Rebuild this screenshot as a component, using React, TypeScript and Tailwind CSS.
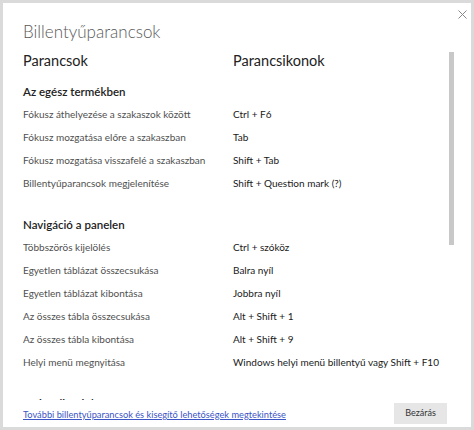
import React from 'react';

const sections = [
  {
    title: 'Az egész termékben',
    rows: [
      ['Fókusz áthelyezése a szakaszok között', 'Ctrl + F6'],
      ['Fókusz mozgatása előre a szakaszban', 'Tab'],
      ['Fókusz mozgatása visszafelé a szakaszban', 'Shift + Tab'],
      ['Billentyűparancsok megjelenítése', 'Shift + Question mark (?)'],
    ],
  },
  {
    title: 'Navigáció a panelen',
    rows: [
      ['Többszörös kijelölés', 'Ctrl + szóköz'],
      ['Egyetlen táblázat összecsukása', 'Balra nyíl'],
      ['Egyetlen táblázat kibontása', 'Jobbra nyíl'],
      ['Az összes tábla összecsukása', 'Alt + Shift + 1'],
      ['Az összes tábla kibontása', 'Alt + Shift + 9'],
      ['Helyi menü megnyitása', 'Windows helyi menü billentyű vagy Shift + F10'],
    ],
  },
  {
    title: 'A vizualizációk',
    rows: [['Vizualizáció kijelölése', 'Tab']],
  },
];

export default function App() {
  return (
    <div
      className="w-[474px] h-[430px] bg-[#dadada] p-[3px]"
      style={{ fontFamily: 'Lato, "Open Sans", sans-serif' }}
    >
      <div className="relative w-full h-full bg-white flex flex-col">
        <button className="absolute right-[2px] top-[4px] w-[14px] h-[14px] flex items-center justify-center text-[#888]">
          <svg width="9" height="9" viewBox="0 0 9 9" stroke="currentColor" strokeWidth="1">
            <path d="M0.5 0.5 L8.5 8.5 M8.5 0.5 L0.5 8.5" />
          </svg>
        </button>

        <div className="pl-[20px] pt-[15px] h-[47px]">
          <h1 className="text-[17px] font-light text-[#595959] leading-[28px]">Billentyűparancsok</h1>
        </div>

        <div className="flex-1 flex min-h-0">
          <div className="flex-1 overflow-hidden pl-[20px]">
            <div className="flex h-[24px] items-center text-[14.5px] text-[#222] mt-[-1px] mb-[7px]">
              <div className="w-[210px] shrink-0">Parancsok</div>
              <div>Parancsikonok</div>
            </div>
            {sections.map((s) => (
              <div key={s.title} className="mb-[18px]">
                <div className="h-[23px] flex items-center text-[11.5px] font-semibold text-[#222]">{s.title}</div>
                {s.rows.map(([cmd, key]) => (
                  <div key={cmd} className="flex h-[23px] items-center text-[10px] whitespace-nowrap">
                    <div className="w-[210px] shrink-0 overflow-hidden text-[#505050]">{cmd}</div>
                    <div className="flex-1 text-left text-[#1a1a1a]">{key}</div>
                  </div>
                ))}
              </div>
            ))}
          </div>
          <div className="w-[5px] mr-[17px] pt-[2px]">
            <div className="h-[193px] bg-[#c8c8c8]" />
          </div>
        </div>

        <div className="h-[27px] flex items-center justify-between pl-[20px] pr-[24px] pt-[2px]">
          <a href="#" className="text-[9.25px] text-[#3b55c6] underline whitespace-nowrap">
            További billentyűparancsok és kisegítő lehetőségek megtekintése
          </a>
          <button className="w-[53px] h-[21px] bg-[#e6e6e6] text-[9px] text-[#333] mb-[3px]">Bezárás</button>
        </div>
      </div>
    </div>
  );
}
